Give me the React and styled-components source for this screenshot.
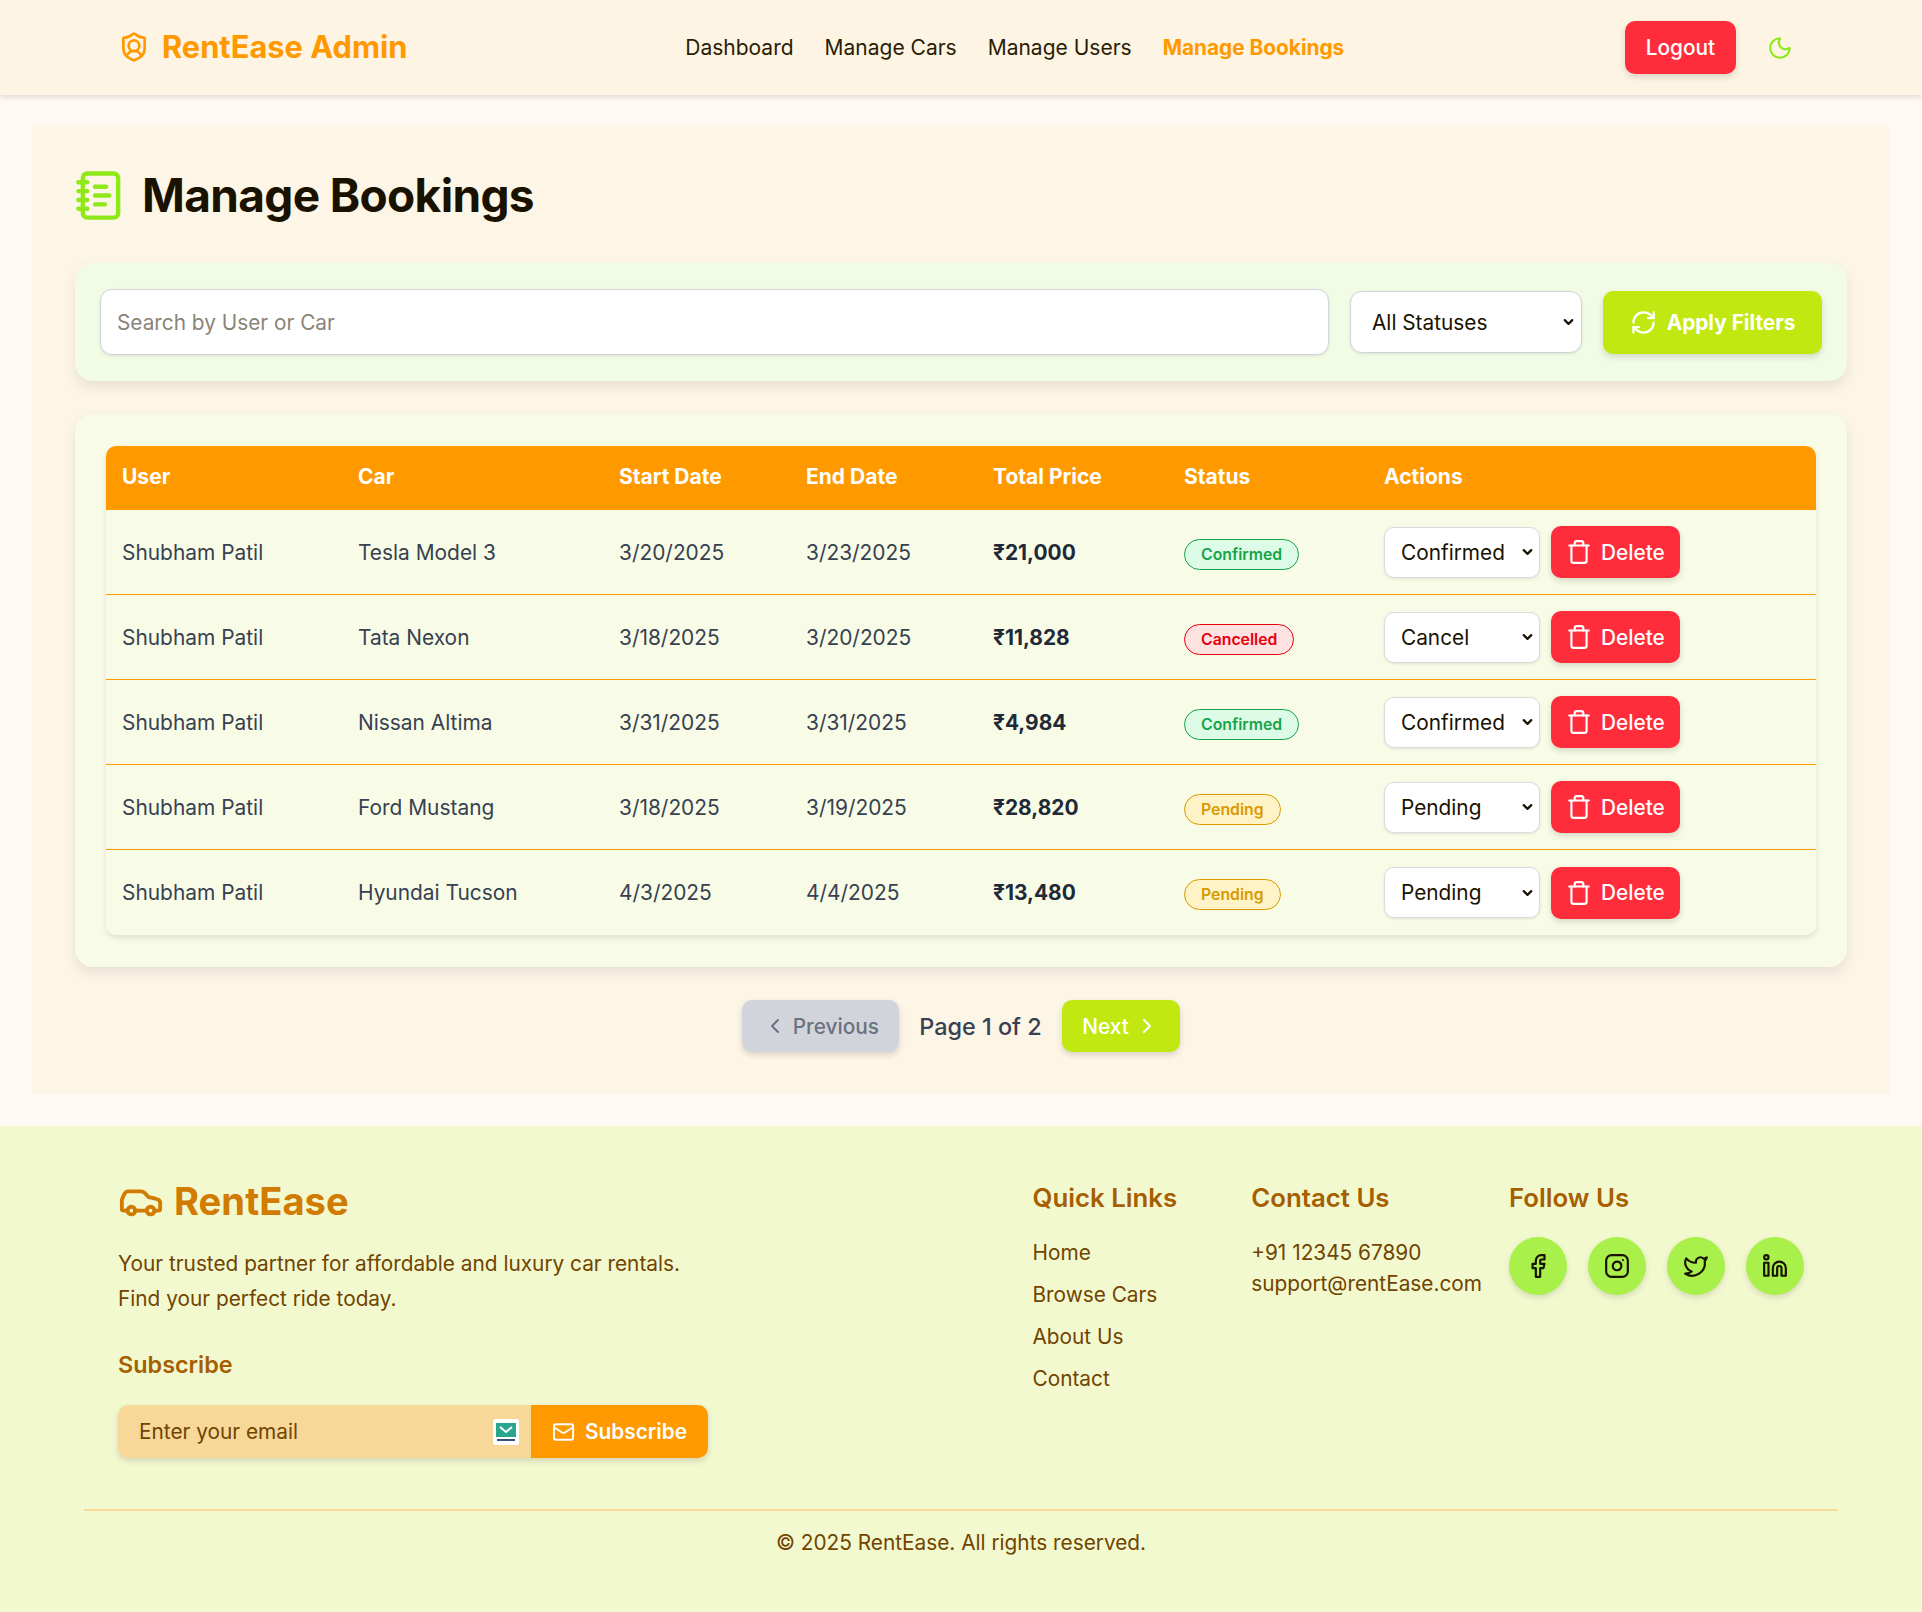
import React from "react";
import styled, { createGlobalStyle } from "styled-components";
import {
  ShieldUser,
  Moon,
  NotebookText,
  RefreshCw,
  Trash,
  ChevronLeft,
  ChevronRight,
  ChevronDown,
  Car,
  Mail,
  Facebook,
  Instagram,
  Twitter,
  Linkedin,
} from "lucide-react";

const GlobalStyle = createGlobalStyle`
  * { box-sizing: border-box; }
  body {
    margin: 0;
    background: #fef9f3;
    font-family: Inter, "Liberation Sans", sans-serif;
    color: #1a1200;
  }
`;

const bookings = [
  { car: "Tesla Model 3", start: "3/20/2025", end: "3/23/2025", price: "₹21,000", status: "Confirmed", action: "Confirmed" },
  { car: "Tata Nexon", start: "3/18/2025", end: "3/20/2025", price: "₹11,828", status: "Cancelled", action: "Cancel" },
  { car: "Nissan Altima", start: "3/31/2025", end: "3/31/2025", price: "₹4,984", status: "Confirmed", action: "Confirmed" },
  { car: "Ford Mustang", start: "3/18/2025", end: "3/19/2025", price: "₹28,820", status: "Pending", action: "Pending" },
  { car: "Hyundai Tucson", start: "4/3/2025", end: "4/4/2025", price: "₹13,480", status: "Pending", action: "Pending" },
];

const badgeColors = {
  Confirmed: { bg: "#dcfce7", fg: "#16a34a" },
  Cancelled: { bg: "#fee2e2", fg: "#e7000b" },
  Pending: { bg: "#fef3c7", fg: "#d99a00" },
};

const Nav = styled.nav`
  height: 95px;
  background: #fdf4e3;
  box-shadow: 0 2px 6px rgba(0, 0, 0, 0.14);
  padding: 0 129px 0 118px;
  display: flex;
  justify-content: space-between;
  align-items: center;
  position: relative;
`;

const Brand = styled.div`
  display: flex;
  align-items: center;
  gap: 12px;
  color: #ff9900;
  font-size: 30.8px;
  font-weight: 700;
  line-height: 36px;
  padding-bottom: 2px;
`;

const NavLinks = styled.div`
  display: flex;
  gap: 31px;
  margin-right: 3px;
`;

const NavLink = styled.a`
  font-size: ${(p) => (p.$active ? "20.8px" : "21px")};
  font-weight: ${(p) => (p.$active ? 700 : 400)};
  color: ${(p) => (p.$active ? "#ff9900" : "#2a1c05")};
`;

const NavRight = styled.div`
  display: flex;
  align-items: center;
  gap: 31px;
  color: #8fe81a;
`;

const LogoutButton = styled.button`
  height: 53px;
  width: 111px;
  border: none;
  border-radius: 10px;
  background: #ff2d3b;
  color: #fff;
  font: 500 20.8px Inter, sans-serif;
  box-shadow: 0 3px 6px rgba(0, 0, 0, 0.14);
`;

const Panel = styled.main`
  margin: 30px 32px 32px;
  padding: 42px 43px 42px;
  background: #fdf5e6;
`;

const TitleRow = styled.div`
  display: flex;
  align-items: center;
  gap: 15px;
  height: 56px;
  margin: 0 0 40px -1px;
  color: #8fe81a;
`;

const Title = styled.h1`
  margin: 0;
  font-size: 46px;
  font-weight: 700;
  color: #1a1200;
  letter-spacing: -0.65px;
`;

const FilterCard = styled.section`
  display: flex;
  align-items: center;
  gap: 21px;
  height: 118px;
  padding: 0 25px;
  background: #f2fce5;
  border-radius: 18px;
  box-shadow: 0 6px 14px rgba(0, 0, 0, 0.09);
`;

const SearchInput = styled.input`
  flex: 1;
  height: 66px;
  padding: 0 16px;
  border: 1.5px solid #d1d5db;
  border-radius: 12px;
  background: #fff;
  font: 400 20.8px Inter, sans-serif;
  box-shadow: 0 1px 3px rgba(0, 0, 0, 0.1);
  &::placeholder {
    color: #8a8378;
  }
`;

const SelectWrap = styled.div`
  position: relative;
  flex: none;
  color: #1a1200;
  svg {
    position: absolute;
    top: 50%;
    right: ${(p) => p.$arrowRight}px;
    transform: translateY(-50%);
    pointer-events: none;
  }
`;

const StatusFilter = styled.select`
  display: block;
  appearance: none;
  width: 232px;
  height: 62px;
  padding: 0 21px;
  border: 1.5px solid #d1d5db;
  border-radius: 12px;
  background: #fff;
  color: #1a1200;
  font: 400 20.8px Inter, sans-serif;
  box-shadow: 0 1px 3px rgba(0, 0, 0, 0.1);
`;

const ApplyButton = styled.button`
  display: flex;
  align-items: center;
  justify-content: center;
  gap: 10px;
  width: 219px;
  height: 63px;
  border: none;
  border-radius: 10px;
  background: #c2e812;
  color: #fff;
  font: 700 20.8px Inter, sans-serif;
  box-shadow: 0 3px 6px rgba(0, 0, 0, 0.14);
`;

const TableCard = styled.section`
  margin-top: 33px;
  padding: 32px 31px;
  background: #f8fce6;
  border-radius: 18px;
  box-shadow: 0 6px 14px rgba(0, 0, 0, 0.09);
`;

const TableShell = styled.div`
  border-radius: 10px;
  overflow: hidden;
  box-shadow: 0 3px 6px rgba(0, 0, 0, 0.1);
`;

const Table = styled.table`
  width: 100%;
  table-layout: fixed;
  border-collapse: separate;
  border-spacing: 0;
`;

const HeadCell = styled.th`
  height: 64px;
  padding: 0 16px 3px;
  background: #ff9900;
  color: #fff;
  font-size: 21px;
  font-weight: 700;
  text-align: left;
`;

const Cell = styled.td`
  height: 85px;
  padding: 0 16px;
  border-bottom: 1px solid #ff9900;
  font-size: 20.9px;
  color: #374151;
  tr:last-child & {
    border-bottom: none;
  }
`;

const PriceCell = styled(Cell)`
  font-weight: 700;
  color: #1f2937;
`;

const Badge = styled.span`
  display: inline-block;
  vertical-align: -5px;
  padding: 5px 16px;
  border: 1.5px solid ${(p) => badgeColors[p.$status].fg};
  border-radius: 999px;
  background: ${(p) => badgeColors[p.$status].bg};
  color: ${(p) => badgeColors[p.$status].fg};
  font-size: 15.8px;
  font-weight: 600;
`;

const Actions = styled.div`
  display: flex;
  align-items: center;
  gap: 11px;
`;

const StatusSelect = styled.select`
  display: block;
  appearance: none;
  width: 156px;
  height: 51px;
  padding: 0 16px;
  border: 1.5px solid #d9dbe0;
  border-radius: 10px;
  background: #fff;
  color: #1a1200;
  font: 400 20.8px Inter, sans-serif;
  box-shadow: 0 1px 3px rgba(0, 0, 0, 0.1);
`;

const DeleteButton = styled.button`
  display: flex;
  align-items: center;
  gap: 9px;
  width: 129px;
  height: 52px;
  padding: 0 15px;
  border: none;
  border-radius: 10px;
  background: #ff2d3b;
  color: #fff;
  font: 500 20.8px Inter, sans-serif;
  box-shadow: 0 3px 6px rgba(0, 0, 0, 0.14);
`;

const Pagination = styled.div`
  margin-top: 33px;
  display: flex;
  justify-content: center;
  align-items: center;
  gap: 20px;
`;

const PageButton = styled.button`
  display: flex;
  align-items: center;
  justify-content: center;
  gap: 6px;
  height: 52px;
  width: ${(p) => p.$width}px;
  border: none;
  border-radius: 10px;
  background: ${(p) => (p.disabled ? "#d1d5db" : "#c2e812")};
  color: ${(p) => (p.disabled ? "#6b7280" : "#fff")};
  font: 500 20.8px Inter, sans-serif;
  box-shadow: 0 3px 6px rgba(0, 0, 0, 0.14);
`;

const PageLabel = styled.span`
  font-size: 23.4px;
  font-weight: 500;
  color: #374151;
`;

const Footer = styled.footer`
  height: 487px;
  padding: 48px 84px 0;
  background: #f3f9cf;
  color: #704400;
`;

const FooterTop = styled.div`
  display: flex;
  padding: 0 34px;
  height: 335px;
`;

const FooterBrandBlock = styled.div`
  flex: 1;
`;

const FooterBrand = styled.div`
  display: flex;
  align-items: center;
  gap: 10px;
  height: 54px;
  color: #d17b00;
  font-size: 38.2px;
  font-weight: 700;
`;

const FooterText = styled.p`
  margin: 18px 0 0;
  font-size: 20.8px;
  line-height: 35px;
`;

const SubscribeTitle = styled.h4`
  margin: 34px 0 0;
  color: #a65f00;
  font-size: 23.4px;
  font-weight: 600;
`;

const SubscribeForm = styled.form`
  position: relative;
  margin-top: 26px;
  display: flex;
  width: 590px;
  height: 53px;
  border-radius: 10px;
  overflow: hidden;
  box-shadow: 0 3px 6px rgba(0, 0, 0, 0.14);
`;

const EmailInput = styled.input`
  flex: 1;
  min-width: 0;
  padding: 0 21px;
  border: none;
  background: #f7d898;
  font: 400 20.8px Inter, sans-serif;
  &::placeholder {
    color: #704400;
  }
`;

const ExtensionBadge = styled.svg`
  position: absolute;
  left: 375px;
  top: 14px;
`;

const SubscribeButton = styled.button`
  display: flex;
  align-items: center;
  gap: 10px;
  width: 177px;
  padding: 0 21px;
  border: none;
  background: #ff9900;
  color: #fff;
  font: 600 20.8px Inter, sans-serif;
`;

const FooterColumn = styled.div`
  margin: 7px 0 0 ${(p) => p.$gap}px;
`;

const ColumnTitle = styled.h3`
  margin: 0 0 22px;
  height: 34px;
  color: #a65f00;
  font-size: 25.8px;
  font-weight: 600;
  line-height: 34px;
`;

const LinkList = styled.div`
  display: flex;
  flex-direction: column;
  gap: 16px;
  padding-top: 3px;
  font-size: 20.8px;
  line-height: 26px;
`;

const ContactList = styled.div`
  font-size: 20.8px;
  line-height: 31px;
`;

const Socials = styled.div`
  display: flex;
  gap: 21px;
`;

const SocialCircle = styled.a`
  display: flex;
  align-items: center;
  justify-content: center;
  width: 58px;
  height: 58px;
  border-radius: 50%;
  background: #aaf04a;
  color: #1a1200;
  box-shadow: 0 3px 6px rgba(0, 0, 0, 0.12);
`;

const Copyright = styled.div`
  border-top: 2px solid #f7d898;
  padding-top: 19px;
  text-align: center;
  font-size: 20.8px;
`;

export default function App() {
  return (
    <>
      <GlobalStyle />
      <Nav>
        <Brand>
          <ShieldUser size={32} />
          RentEase Admin
        </Brand>
        <NavLinks>
          <NavLink>Dashboard</NavLink>
          <NavLink>Manage Cars</NavLink>
          <NavLink>Manage Users</NavLink>
          <NavLink $active>Manage Bookings</NavLink>
        </NavLinks>
        <NavRight>
          <LogoutButton>Logout</LogoutButton>
          <Moon size={26} />
        </NavRight>
      </Nav>

      <Panel>
        <TitleRow>
          <NotebookText size={53} />
          <Title>Manage Bookings</Title>
        </TitleRow>

        <FilterCard>
          <SearchInput placeholder="Search by User or Car" />
          <SelectWrap $arrowRight={6}>
            <StatusFilter defaultValue="all">
              <option value="all">All Statuses</option>
            </StatusFilter>
            <ChevronDown size={15} strokeWidth={3.5} />
          </SelectWrap>
          <ApplyButton>
            <RefreshCw size={27} />
            Apply Filters
          </ApplyButton>
        </FilterCard>

        <TableCard>
          <TableShell>
            <Table>
              <colgroup>
                <col style={{ width: 236 }} />
                <col style={{ width: 261 }} />
                <col style={{ width: 187 }} />
                <col style={{ width: 187 }} />
                <col style={{ width: 191 }} />
                <col style={{ width: 200 }} />
                <col />
              </colgroup>
              <thead>
                <tr>
                  {["User", "Car", "Start Date", "End Date", "Total Price", "Status", "Actions"].map((h) => (
                    <HeadCell key={h}>{h}</HeadCell>
                  ))}
                </tr>
              </thead>
              <tbody>
                {bookings.map((b) => (
                  <tr key={b.car}>
                    <Cell>Shubham Patil</Cell>
                    <Cell>{b.car}</Cell>
                    <Cell>{b.start}</Cell>
                    <Cell>{b.end}</Cell>
                    <PriceCell>{b.price}</PriceCell>
                    <Cell>
                      <Badge $status={b.status}>{b.status}</Badge>
                    </Cell>
                    <Cell>
                      <Actions>
                        <SelectWrap $arrowRight={5}>
                          <StatusSelect defaultValue={b.action}>
                            <option>Confirmed</option>
                            <option>Cancel</option>
                            <option>Pending</option>
                          </StatusSelect>
                          <ChevronDown size={15} strokeWidth={3.5} />
                        </SelectWrap>
                        <DeleteButton>
                          <Trash size={26} />
                          Delete
                        </DeleteButton>
                      </Actions>
                    </Cell>
                  </tr>
                ))}
              </tbody>
            </Table>
          </TableShell>
        </TableCard>

        <Pagination>
          <PageButton disabled $width={157}>
            <ChevronLeft size={24} />
            Previous
          </PageButton>
          <PageLabel>Page 1 of 2</PageLabel>
          <PageButton $width={118}>
            Next
            <ChevronRight size={24} />
          </PageButton>
        </Pagination>
      </Panel>

      <Footer>
        <FooterTop>
          <FooterBrandBlock>
            <FooterBrand>
              <Car size={46} />
              RentEase
            </FooterBrand>
            <FooterText>
              Your trusted partner for affordable and luxury car rentals.
              <br />
              Find your perfect ride today.
            </FooterText>
            <SubscribeTitle>Subscribe</SubscribeTitle>
            <SubscribeForm>
              <EmailInput placeholder="Enter your email" />
              <ExtensionBadge width="26" height="26" viewBox="0 0 26 26">
                <rect width="26" height="26" rx="2" fill="#fff" />
                <path d="M3 4h20v14H3z" fill="#2aa68e" />
                <path d="M7 8l6 5 6-5" fill="none" stroke="#fff" strokeWidth="2" />
                <rect x="4" y="20" width="18" height="2" fill="#35507a" />
              </ExtensionBadge>
              <SubscribeButton>
                <Mail size={24} />
                Subscribe
              </SubscribeButton>
            </SubscribeForm>
          </FooterBrandBlock>

          <FooterColumn $gap={0}>
            <ColumnTitle>Quick Links</ColumnTitle>
            <LinkList>
              <span>Home</span>
              <span>Browse Cars</span>
              <span>About Us</span>
              <span>Contact</span>
            </LinkList>
          </FooterColumn>
          <FooterColumn $gap={74}>
            <ColumnTitle>Contact Us</ColumnTitle>
            <ContactList>
              +91 12345 67890
              <br />
              support@rentEase.com
            </ContactList>
          </FooterColumn>
          <FooterColumn $gap={27}>
            <ColumnTitle>Follow Us</ColumnTitle>
            <Socials>
              <SocialCircle><Facebook size={26} /></SocialCircle>
              <SocialCircle><Instagram size={26} /></SocialCircle>
              <SocialCircle><Twitter size={26} /></SocialCircle>
              <SocialCircle><Linkedin size={26} /></SocialCircle>
            </Socials>
          </FooterColumn>
        </FooterTop>
        <Copyright>© 2025 RentEase. All rights reserved.</Copyright>
      </Footer>
    </>
  );
}
